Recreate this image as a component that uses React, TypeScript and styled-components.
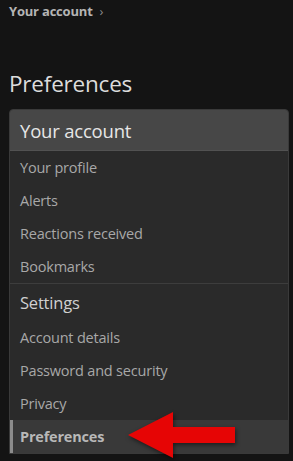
import React from "react";
import styled, { createGlobalStyle } from "styled-components";

const Global = createGlobalStyle`
  html, body { margin: 0; padding: 0; background: #141414; }
  body { font-family: "Open Sans", "Noto Sans", sans-serif; }
`;

const Page = styled.div`
  width: 293px;
  height: 461px;
  overflow: hidden;
  background: #141414;
  padding: 0 0 0 9px;
  box-sizing: border-box;
`;

const Crumb = styled.div`
  display: flex;
  align-items: center;
  gap: 7px;
  height: 20px;
  padding-top: 1px;
  font-size: 13px;
  font-weight: 700;
  color: #b4b4b4;
  letter-spacing: -0.2px;
`;

const Chevron = styled.span`
  font-weight: 400;
  color: #8a8a8a;
  font-size: 13px;
`;

const Title = styled.h1`
  margin: 50px 0 0;
  height: 38px;
  font-size: 22.5px;
  line-height: 26px;
  font-weight: 400;
  color: #dcdcdc;
  letter-spacing: -0.2px;
`;

const Card = styled.nav`
  width: 280px;
  background: #2a2a2a;
  border: 1px solid #3a3a3a;
  border-radius: 4px 4px 0 0;
  box-sizing: border-box;
`;

const Header = styled.div`
  height: 41px;
  background: #474747;
  border-bottom: 1px solid #525252;
  border-radius: 3px 3px 0 0;
  display: flex;
  align-items: center;
  padding-left: 10px;
  font-size: 18.5px;
  color: #e6e6e6;
  letter-spacing: -0.2px;
  box-sizing: border-box;
`;

const Section = styled.div<{ $divider?: boolean }>`
  border-top: ${(p) => (p.$divider ? "1px solid #3d3d3d" : "none")};
`;

const SubHead = styled.div`
  height: 37px;
  display: flex;
  align-items: center;
  padding-left: 10px;
  font-size: 16.5px;
  color: #d0d0d0;
  letter-spacing: -0.2px;
`;

const Row = styled.div<{ $active?: boolean }>`
  position: relative;
  height: 33px;
  display: flex;
  align-items: center;
  font-size: 14.5px;
  letter-spacing: -0.2px;
  color: ${(p) => (p.$active ? "#b8b8b8" : "#a8a8a8")};
  font-weight: ${(p) => (p.$active ? 700 : 400)};
  background: ${(p) => (p.$active ? "#393939" : "transparent")};
  border-left: 3px solid ${(p) => (p.$active ? "#8c8c8c" : "transparent")};
  padding-left: 7px;
`;

const Arrow = styled.svg`
  position: absolute;
  left: 114px;
  top: -8px;
  filter: drop-shadow(1px 2px 2px rgba(0, 0, 0, 0.5));
`;

export default function App() {
  return (
    <>
      <Global />
      <Page>
        <Crumb>
          Your account <Chevron>›</Chevron>
        </Crumb>
        <Title>Preferences</Title>
        <Card>
          <Header>Your account</Header>
          <Section>
            <Row>Your profile</Row>
            <Row>Alerts</Row>
            <Row>Reactions received</Row>
            <Row>Bookmarks</Row>
          </Section>
          <Section $divider>
            <SubHead>Settings</SubHead>
            <Row>Account details</Row>
            <Row>Password and security</Row>
            <Row>Privacy</Row>
            <Row $active>
              Preferences
              <Arrow width="110" height="48" viewBox="0 0 110 48">
                <polygon points="1,23 46,0 46,15 108,15 108,31 46,31 46,46" fill="#e60505" />
              </Arrow>
            </Row>
          </Section>
        </Card>
      </Page>
    </>
  );
}
